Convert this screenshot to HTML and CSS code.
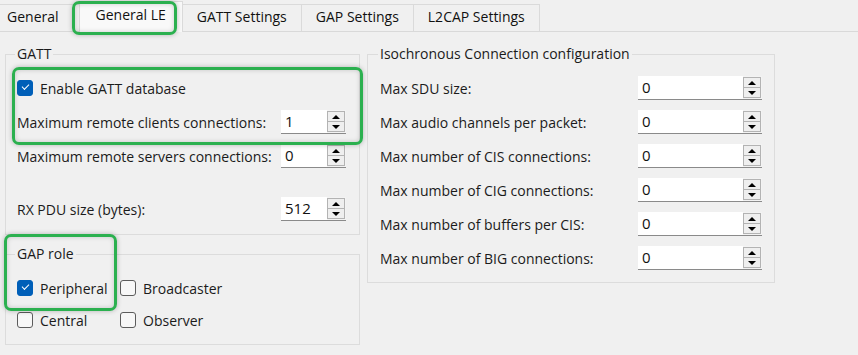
FILE: index.html
```html
<!DOCTYPE html>
<html lang="en">
<head>
    <meta charset="UTF-8">
    <title>General LE</title>
    <link rel="stylesheet" href="styles.css">
</head>
<body>
<div class="tabs">
    <div class="tab">General</div>
    <div class="tab active">General LE</div>
    <div class="tab">GATT Settings</div>
    <div class="tab">GAP Settings</div>
    <div class="tab">L2CAP Settings</div>
</div>
<div class="panel">
    <div class="col-left">
        <fieldset class="group gatt">
            <legend>GATT</legend>
            <div class="row">
                <label class="check"><span class="box checked"></span>Enable GATT database</label>
            </div>
            <div class="row">
                <span>Maximum remote clients connections:</span>
                <div class="spin"><span class="value">1</span><span class="arrows"><i class="up"></i><i class="down"></i></span></div>
            </div>
            <div class="row">
                <span>Maximum remote servers connections:</span>
                <div class="spin"><span class="value">0</span><span class="arrows"><i class="up"></i><i class="down"></i></span></div>
            </div>
            <div class="spacer"></div>
            <div class="row">
                <span>RX PDU size (bytes):</span>
                <div class="spin"><span class="value">512</span><span class="arrows"><i class="up"></i><i class="down"></i></span></div>
            </div>
        </fieldset>
        <fieldset class="group gap-role">
            <legend>GAP role</legend>
            <div class="roles">
                <label class="check"><span class="box checked"></span>Peripheral</label>
                <label class="check"><span class="box"></span>Broadcaster</label>
                <label class="check"><span class="box"></span>Central</label>
                <label class="check"><span class="box"></span>Observer</label>
            </div>
        </fieldset>
    </div>
    <fieldset class="group iso">
        <legend>Isochronous Connection configuration</legend>
        <div class="row">
            <span>Max SDU size:</span>
            <div class="spin"><span class="value">0</span><span class="arrows"><i class="up"></i><i class="down"></i></span></div>
        </div>
        <div class="row">
            <span>Max audio channels per packet:</span>
            <div class="spin"><span class="value">0</span><span class="arrows"><i class="up"></i><i class="down"></i></span></div>
        </div>
        <div class="row">
            <span>Max number of CIS connections:</span>
            <div class="spin"><span class="value">0</span><span class="arrows"><i class="up"></i><i class="down"></i></span></div>
        </div>
        <div class="row">
            <span>Max number of CIG connections:</span>
            <div class="spin"><span class="value">0</span><span class="arrows"><i class="up"></i><i class="down"></i></span></div>
        </div>
        <div class="row">
            <span>Max number of buffers per CIS:</span>
            <div class="spin"><span class="value">0</span><span class="arrows"><i class="up"></i><i class="down"></i></span></div>
        </div>
        <div class="row">
            <span>Max number of BIG connections:</span>
            <div class="spin"><span class="value">0</span><span class="arrows"><i class="up"></i><i class="down"></i></span></div>
        </div>
    </fieldset>
</div>
<!-- highlight frames -->
<div class="mark mark-tab"></div>
<div class="mark mark-gatt"></div>
<div class="mark mark-role"></div>
</body>
</html>
```

FILE: styles.css
```css
body { margin: 0; background: #f0f0f0; color: #1b1b1b; font-family: "Open Sans", "Noto Sans", sans-serif; font-size: 14px; width: 858px; height: 355px; overflow: hidden; position: relative; }

.tabs { display: flex; align-items: flex-end; height: 31px; border-bottom: 1px solid #d9d9d9; }
.tab { height: 27px; box-sizing: border-box; padding: 0 14px; line-height: 24px; border: 1px solid #dadada; border-bottom: none; margin-left: -1px; color: #111; }
.tab:first-child { padding: 0 20px 0 7px; }
.tab.active { height: 31px; margin-bottom: -1px; padding: 0 16px; line-height: 26px; background: #f9f9f9; }

.panel { display: flex; align-items: flex-start; gap: 7px; padding: 13px 5px 0; }
.col-left { display: flex; flex-direction: column; gap: 10px; width: 355px; }

.group { margin: 0; border: 1px solid #dcdcdc; padding: 8px 13px 8px 11px; min-width: 0; }
.group legend { padding: 0 2px; margin-left: -2px; line-height: 18px; }
.iso { width: 408px; box-sizing: border-box; padding: 8px 12px 7px 12px; }

.row { display: grid; grid-template-columns: 1fr 65px; align-items: center; height: 34px; }
.iso .row { grid-template-columns: 1fr 124px; }
.spacer { height: 19px; }

.check { display: flex; align-items: center; gap: 7px; }
.box { width: 16px; height: 16px; box-sizing: border-box; border: 1px solid #5c5c5c; border-radius: 3px; background: #f7f7f7; position: relative; }
.box.checked { background: #005fb8; border-color: #005fb8; }
.box.checked::after { content: ""; position: absolute; left: 4px; top: 3px; width: 6px; height: 3px; border-left: 1px solid #fff; border-bottom: 1px solid #fff; transform: rotate(-45deg); }

.roles { display: grid; grid-template-columns: 103px auto; grid-auto-rows: 32px; align-items: center; padding-top: 1px; }

.spin { display: flex; height: 24px; background: #fff; border-bottom: 1px solid #8a8a8a; box-sizing: border-box; }
.value { flex: 1; padding-left: 4px; line-height: 23px; font-size: 15px; color: #111; }
.arrows { display: flex; flex-direction: column; width: 18px; padding: 1px 1px 1px 0; background: #f3f3f3; }
.arrows i { flex: 1; border: 1px solid #b3b3b3; background: #efefef; position: relative; }
.arrows i + i { border-top: none; }
.arrows i::after { content: ""; position: absolute; left: 50%; top: 50%; margin-left: -4px; border-left: 4px solid transparent; border-right: 4px solid transparent; }
.arrows .up::after { margin-top: -2px; border-bottom: 4px solid #000; }
.arrows .down::after { margin-top: -2px; border-top: 4px solid #000; }

.mark { position: absolute; box-sizing: border-box; border: 3px solid #2bb04f; border-radius: 7px; box-shadow: 0 0 5px rgba(0,0,0,0.25), inset 0 0 5px rgba(0,0,0,0.18); }
.mark-tab { left: 72px; top: 1px; width: 105px; height: 34px; }
.mark-gatt { left: 12px; top: 67px; width: 351px; height: 78px; }
.mark-role { left: 4px; top: 234px; width: 113px; height: 77px; }
```
